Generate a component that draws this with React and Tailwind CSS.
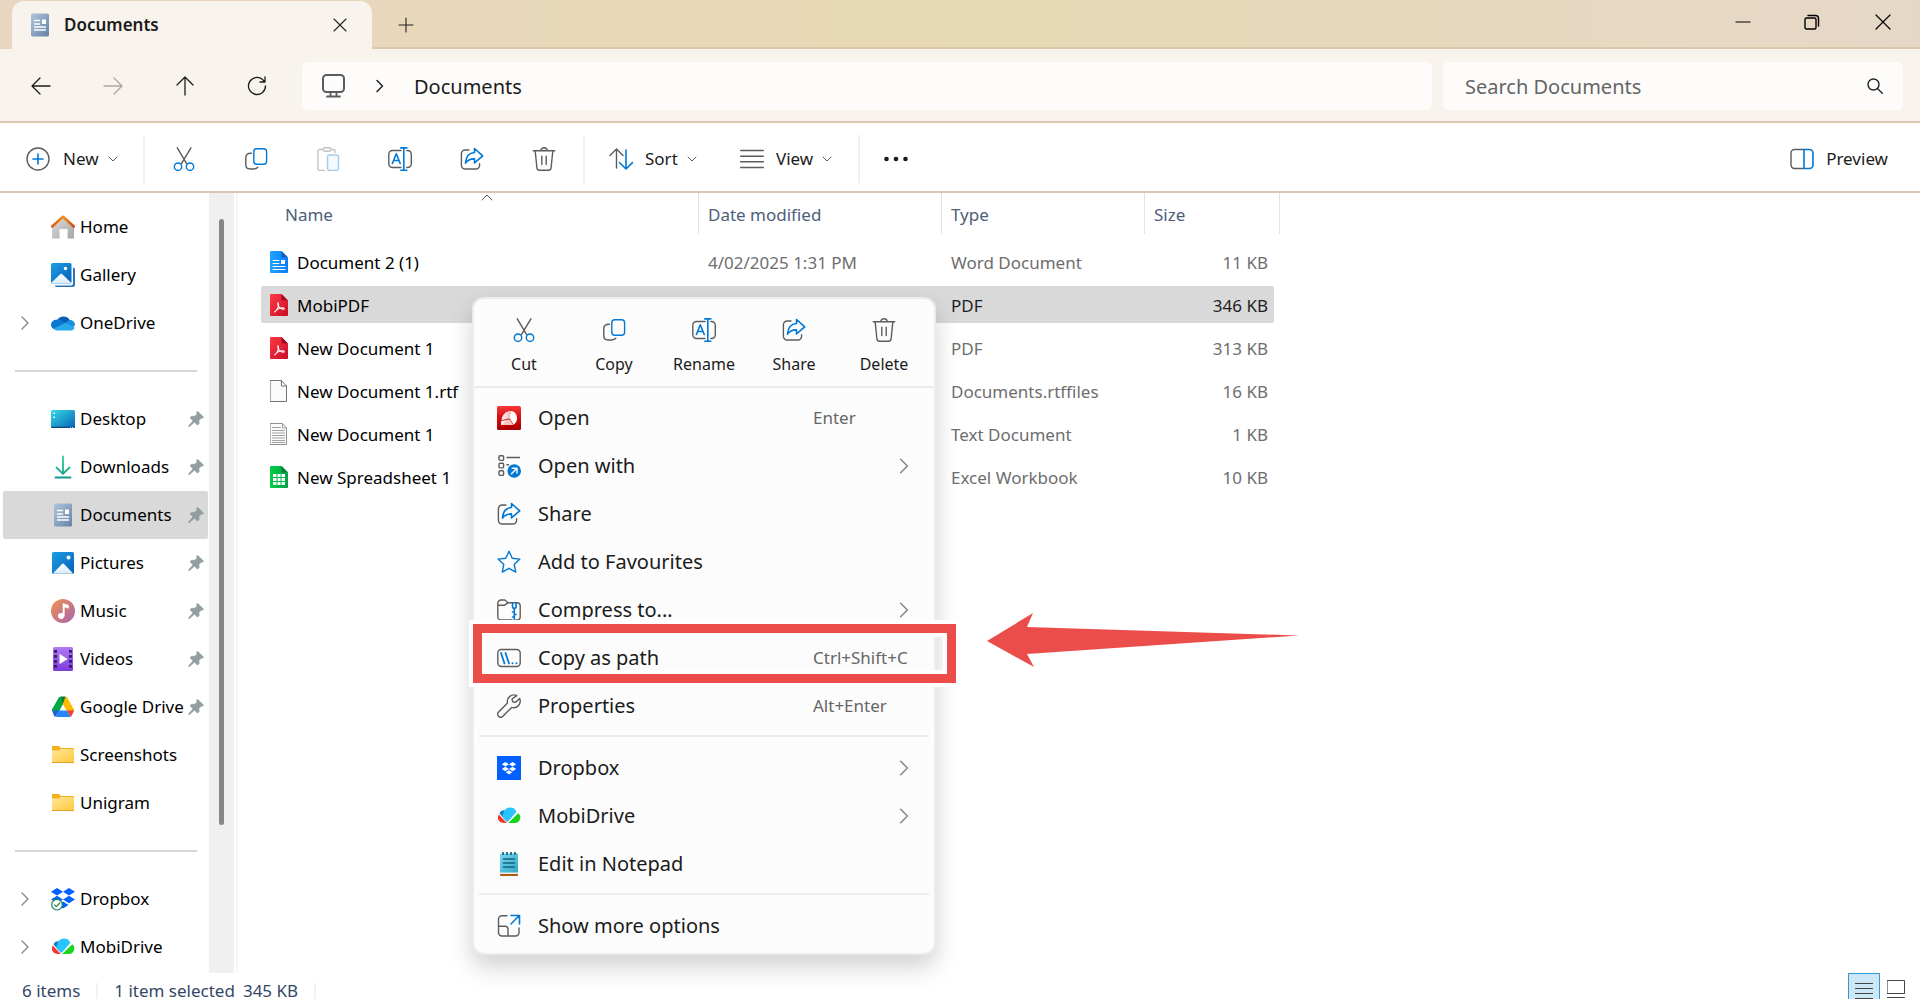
const Icon = ({ children, className = 'w-6 h-6', box = '0 0 24 24' }) => (
    <svg viewBox={box} className={`${className} shrink-0`} fill="none" stroke="#5c5c5c" strokeWidth="1.4" strokeLinecap="round" strokeLinejoin="round" aria-hidden="true">
        {children}
    </svg>
);

const BLUE = '#0078d4';

/* Command icons */
const CutIcon = () => (
    <Icon>
        <path d="M5.3.8l9.2 15.6M18.9.8L9.6 16.4" />
        <g stroke={BLUE}><circle cx="6" cy="19.7" r="3.7" /><circle cx="18" cy="19.7" r="3.7" /></g>
    </Icon>
);
const CopyIcon = () => (
    <Icon>
        <path d="M7.4 6.2C3.5 6 1.8 7.600 1.800 10.500v7.300c0 2.600 1.600 4.200 4.200 4.200h3.500c2 0 3.600-.6 4.300-1.800" />
        <rect x="9.8" y="1.700" width="12.800" height="15.600" rx="3" stroke={BLUE} />
    </Icon>
);
const PasteIcon = () => (
    <Icon>
        <g stroke="#c4c4c4">
            <path d="M7 2.500H3.500a1.500 1.500 0 0 0-1.500 1.500v18a1.500 1.500 0 0 0 1.500 1.500h5M15 2.500h2.500a1.500 1.500 0 0 1 1.500 1.500v1.500" />
            <rect x="7" y=".8" width="8" height="3.500" rx="1.700" />
        </g>
        <rect x="11.500" y="8" width="11" height="15.500" rx="2" stroke="#a3cdec" fill="#f3f9fd" />
    </Icon>
);
const RenameIcon = () => (
    <Icon>
        <path d="M13 3.500H4.500a3.700 3.700 0 0 0-3.700 3.700v9.600a3.700 3.700 0 0 0 3.700 3.700H13M18.800 3.500h.8a3.700 3.700 0 0 1 3.700 3.700v9.600a3.700 3.700 0 0 1-3.700 3.700h-.8" />
        <path d="M12.800.9h6M12.800 23.200h6M15.800.9v22.300M4.400 16.500L8.300 6.800l3.900 9.700M5.700 13.500h5.200" stroke={BLUE} strokeWidth="1.600" />
    </Icon>
);
const ShareIcon = () => (
    <Icon>
        <path d="M9 3H5.200A3.800 3.800 0 0 0 1.400 6.800v11.400A3.800 3.800 0 0 0 5.200 22h10.600a3.800 3.800 0 0 0 3.800-3.800v-1.400" />
        <path d="M14.500 1.500l8.200 7.400-8.200 7v-4c-4.200-.1-7 1-9 4.300.3-6 3.200-10.200 9-10.700z" stroke={BLUE} strokeWidth="1.600" />
    </Icon>
);
const DeleteIcon = () => (
    <Icon>
        <path d="M1.300 3.700h21.400M8.800 3.500a3.200 2.800 0 0 1 6.400 0M3.200 4l1.700 16.800a2.500 2.500 0 0 0 2.500 2.400h9.200a2.500 2.500 0 0 0 2.500-2.400L20.800 4M9.800 9.200v8.300M14.200 9.200v8.300" />
    </Icon>
);

const ChevronDown = () => <Icon className="w-2.5 h-2.5" box="0 0 10 10"><path d="M1 3l4 4 4-4" strokeWidth="1" /></Icon>;
const ChevronRight = ({ className = 'w-4 h-4' }) => <Icon className={className} box="0 0 16 16"><path d="M5 2l6 6-6 6" stroke="#858585" strokeWidth="1.300" /></Icon>;

/* Colour icons */
const DocumentsIcon = () => (
    <Icon>
        <defs><linearGradient id="docs" x1="0" y1="0" x2="1" y2="1"><stop stopColor="#b0c5dc" /><stop offset="1" stopColor="#6482a6" /></linearGradient></defs>
        <rect x="3" y=".5" width="18" height="23" rx="1.500" fill="url(#docs)" stroke="none" />
        <path d="M6.500 7.500h5M6.500 11h5M6.500 14h11M6.500 17h11" stroke="#fff" />
        <rect x="14" y="6.500" width="4" height="4.500" fill="#fff" stroke="none" />
    </Icon>
);
const HomeIcon = () => (
    <Icon>
        <defs>
            <linearGradient id="wall" x1="0" y1="0" x2="1" y2="1"><stop stopColor="#dedede" /><stop offset="1" stopColor="#a5a5a5" /></linearGradient>
            <linearGradient id="roof" x1="0" x2="1"><stop stopColor="#dd5c14" /><stop offset=".5" stopColor="#f09020" /><stop offset="1" stopColor="#d04a0c" /></linearGradient>
        </defs>
        <path d="M1 11L12 2l11 9v11.500a1 1 0 0 1-1 1h-5.500V14h-8v9.500H2a1 1 0 0 1-1-1z" fill="url(#wall)" stroke="none" />
        <path d="M1.200 11.500L12 1.800l10.800 9.700" stroke="url(#roof)" strokeWidth="2.600" />
    </Icon>
);
const PhotoDefs = () => (
    <defs>
        <linearGradient id="photo" x1="0" y1="0" x2="1" y2="1"><stop stopColor="#1ba0e8" /><stop offset="1" stopColor="#0a5db5" /></linearGradient>
        <linearGradient id="hill" x1="0" y1="0" x2="0" y2="1"><stop stopColor="#fff" /><stop offset="1" stopColor="#d8ebfa" /></linearGradient>
    </defs>
);
const GalleryIcon = () => (
    <Icon>
        <PhotoDefs />
        <path d="M22 4.500a2 2 0 0 1 2 1.500v15.500a2.500 2.500 0 0 1-2.500 2.500H5.500a2.500 2.500 0 0 1-2-1.500H20a2 2 0 0 0 2-2z" fill="#2875bd" stroke="none" />
        <rect width="20.500" height="20.500" rx="1.500" fill="url(#photo)" stroke="none" />
        <path d="M0 20l9.500-9a1.200 1.200 0 0 1 1.500 0l9.500 9-1 .5H1z" fill="url(#hill)" stroke="none" />
        <circle cx="14.500" cy="5.500" r="1.700" fill="#fff" stroke="none" />
    </Icon>
);
const PicturesIcon = () => (
    <Icon>
        <PhotoDefs />
        <rect x="1" y="1" width="22" height="22" rx="1.500" fill="url(#photo)" stroke="none" />
        <path d="M2 22.200l9.300-9.400a1 1 0 0 1 1.400 0l9.300 9.400-1 .5H3z" fill="url(#hill)" stroke="none" />
        <circle cx="17.500" cy="6.500" r="2" fill="#fff" stroke="none" />
    </Icon>
);
const OneDriveIcon = () => (
    <Icon>
        <g stroke="none">
            <path d="M6 10a7 7 0 0 1 12.500-1.300L15 15 6 12z" fill="#0a5fb4" />
            <path d="M9 8.800L15 12 4 18.500a5 5 0 0 1-4-5A5 5 0 0 1 5 8.800a7 7 0 0 1 4 0z" fill="#0b78d2" />
            <path d="M13.500 12.500l5-3.800c3.500.2 5.500 2.800 5.500 5.300l-2 2.500z" fill="#1490df" />
            <path d="M2.500 17.800L14 12l9.500 4.200a4 4 0 0 1-4 3.300H5.500a5.500 5.500 0 0 1-3-1.700z" fill="#28a8ea" />
        </g>
    </Icon>
);
const DesktopIcon = () => (
    <Icon>
        <defs><linearGradient id="desk" x1="0" y1="0" x2="1" y2="1"><stop stopColor="#35dbe4" /><stop offset="1" stopColor="#0a62b8" /></linearGradient></defs>
        <rect y="3" width="24" height="18" rx="1.500" fill="url(#desk)" stroke="none" />
        <path d="M0 19.800h24a1.300 1.300 0 0 1-1.300 1.200H1.300A1.300 1.300 0 0 1 0 19.800z" fill="#094a7c" stroke="none" />
        <path d="M2.500 5.500h1.500v1.500H2.500zM2.500 9.500h1.500V11H2.500zM19 19.900h1v.8h-1zM21 19.900h1v.8h-1z" fill="#fff" stroke="none" />
    </Icon>
);
const DownloadsIcon = () => (
    <Icon>
        <defs><linearGradient id="down" gradientUnits="userSpaceOnUse" x1="0" y1="0" x2="0" y2="24"><stop stopColor="#35d488" /><stop offset="1" stopColor="#10958f" /></linearGradient></defs>
        <path d="M12 1.500v17M5.500 12.500l6.500 6.300 6.500-6.300M4.500 22.500h15" stroke="url(#down)" strokeWidth="1.800" />
    </Icon>
);
const MusicIcon = () => (
    <Icon>
        <defs><linearGradient id="music" x1="0" y1="0" x2="1" y2="1"><stop stopColor="#f2924e" /><stop offset="1" stopColor="#a765b0" /></linearGradient></defs>
        <circle cx="12" cy="12" r="12" fill="url(#music)" stroke="none" />
        <circle cx="10" cy="17" r="3" fill="#fff" stroke="none" />
        <path d="M12 17V4.500l5.500 1.800v3L13.300 8v9z" fill="#fff" stroke="#fff" strokeWidth=".6" />
    </Icon>
);
const VideosIcon = () => (
    <Icon>
        <defs><linearGradient id="video" x1="0" y1="0" x2="0" y2="1"><stop stopColor="#b07af2" /><stop offset="1" stopColor="#7e3bdc" /></linearGradient></defs>
        <rect x="2" width="20" height="24" rx="1.500" fill="url(#video)" stroke="none" />
        <path d="M4.500 3v19M19.500 3v19" stroke="#3c1a6e" strokeWidth="3" strokeDasharray="2.800 2.200" strokeLinecap="butt" />
        <path d="M9 7.500l7.200 4.500L9 16.500z" fill="#fff" stroke="#fff" strokeWidth=".6" />
    </Icon>
);
const GoogleDriveIcon = () => (
    <Icon>
        <g stroke="none">
            <path d="M8 2.200L1.200 14a2.500 2.500 0 0 0 0 2h7L13 7.300 9.500 1.700z" fill="#00a743" />
            <path d="M9.500 1.700C10 1.500 14 1.500 14.500 1.700L16 2.500 12 9z" fill="#0a7d3a" />
            <path d="M14.500 1.700c.8.100 1.300.4 1.700 1L23 14.500a2.500 2.500 0 0 1 0 1.500h-7.200L11.800 9z" fill="#ffba00" />
            <path d="M1 15.500h7.500l-4 6.300c-.7-.2-1-.5-1.400-1.100z" fill="#1a62d6" />
            <path d="M8.200 15.500h7.600l4 6.300c-.5.300-14.500.3-15.300 0z" fill="#2684fc" />
            <path d="M15.800 15.500H23c0 1-2 4.500-2.300 5.200-.3.600-.6.900-1 1.100z" fill="#ea4335" />
        </g>
    </Icon>
);
const FolderIcon = () => (
    <Icon>
        <defs><linearGradient id="folder" x1="0" y1="0" x2="1" y2="1"><stop stopColor="#ffe79a" /><stop offset="1" stopColor="#ffc83c" /></linearGradient></defs>
        <path d="M1 4a1 1 0 0 1 1-1h6l2 2h12a1 1 0 0 1 1 1v5H1z" fill="#f2b01e" stroke="none" />
        <path d="M1 7.500h7l1.500-1.500H23v13a1 1 0 0 1-1 1H2a1 1 0 0 1-1-1z" fill="url(#folder)" stroke="none" />
        <path d="M1.500 19.500h21" stroke="#e3a11c" strokeWidth="1" />
    </Icon>
);
const dropboxPath = 'M6 1l6 3.700-6 3.700-6-3.700zM18 1l6 3.700-6 3.700-6-3.700zM6 8.800l6 3.700-6 3.700-6-3.700zM18 8.800l6 3.700-6 3.700-6-3.700zM12 14.600l5.500 3.500L12 21.600l-5.500-3.500z';
const DropboxIcon = () => (
    <Icon>
        <path d={dropboxPath} fill="#0061fe" stroke="none" />
        <circle cx="6" cy="17.700" r="5.300" fill="#fff" stroke="#1d8757" strokeWidth="1.200" />
        <path d="M3.500 17.800l1.800 1.800 3.400-3.600" stroke="#1d8757" strokeWidth="1.200" />
    </Icon>
);
const DropboxTile = () => (
    <Icon>
        <path d="M0 0h24v24H0z" fill="#0061fe" stroke="none" />
        <path d={dropboxPath} fill="#fff" stroke="none" transform="translate(4.800 5.500) scale(.6)" />
    </Icon>
);
const MobiDriveIcon = () => (
    <Icon>
        <g stroke="none">
            <path d="M2.500 9.500a5 5 0 0 1 5-3.300l2 11z" fill="#1681c4" />
            <path d="M1.800 10.500l8 8.500H6.500a5.500 5.500 0 0 1-4.700-8.500z" fill="#f6352b" />
            <path d="M6.800 8.500a6.500 6.500 0 0 1 12.500-.5l-9 10.200L5 12.500z" fill="#29c3ff" />
            <path d="M21.300 9.300A5.500 5.500 0 0 1 18 19h-7z" fill="#17d41d" />
            <path d="M20.800 8L10.500 19" stroke="#fff" strokeWidth="1" />
        </g>
    </Icon>
);
const PinIcon = () => (
    <Icon className="w-4 h-4" box="0 0 16 16">
        <path d="M9.800.5l5.700 5.700-1.200 1-1-.2-2.400 2.600.1 3-1.500 1.500-3-3L1.500 15.500.7 15.600l.1-.8 4.300-5-3-3L3.600 5.300l3 .1L9.200 3 8.800 1.500z" fill="#919ca3" stroke="#919ca3" strokeWidth=".8" />
    </Icon>
);

/* File type icons, 18 wide by 22 high */
const Sheet = ({ children }) => <Icon className="w-[18px] h-[22px]" box="0 0 18 22">{children}</Icon>;
const WordFile = () => (
    <Sheet>
        <defs><linearGradient id="word" x1="0" x2="1"><stop stopColor="#22a4ff" /><stop offset="1" stopColor="#0a7cf5" /></linearGradient></defs>
        <path d="M1 0h10.500L18 6.500V21a1 1 0 0 1-1 1H1a1 1 0 0 1-1-1V1a1 1 0 0 1 1-1z" fill="url(#word)" stroke="none" />
        <path d="M11.500 0L18 6.500h-6.500z" fill="#0b62c4" stroke="none" />
        <path d="M3 9.500h6M3 12.500h6M3 15.500h12M3 18.500h12" stroke="#fff" strokeWidth="1" />
        <rect x="11" y="9" width="4" height="4" fill="#fff" stroke="none" />
    </Sheet>
);
const PdfFile = () => (
    <Sheet>
        <defs><linearGradient id="pdf" x1="0" y1="0" x2="1" y2="1"><stop stopColor="#ff3a44" /><stop offset="1" stopColor="#c90d28" /></linearGradient></defs>
        <path d="M1 0h10.500L18 6.500V21a1 1 0 0 1-1 1H1a1 1 0 0 1-1-1V1a1 1 0 0 1 1-1z" fill="url(#pdf)" stroke="none" />
        <path d="M11.500 0L18 6.500h-6.500z" fill="#a60a20" stroke="none" />
        <path d="M8 8.500c-1 2.500 2 6.500 5 6.800 1.800 0 1.500-1.600-.5-1.500-3 .1-5.500 1.300-7.800 4M8 8.500c1.600 2.800-.5 7-3.300 9.300" stroke="#fff" strokeWidth="1.100" />
    </Sheet>
);
const BlankFile = () => (
    <Sheet>
        <path d="M.5.5h11l5 5.500v15.500H.5z" fill="#fafafa" stroke="#757575" strokeWidth="1" />
        <path d="M11.500.5V6h5" stroke="#757575" strokeWidth="1" />
    </Sheet>
);
const TextFile = () => (
    <Sheet>
        <path d="M.5.5h12l4 4.500v16.500H.5z" fill="#fafafa" stroke="#8f8f8f" strokeWidth="1" />
        <path d="M12.500.5V5h4M2.500 4.500h8M2.500 7.500h12M2.500 10h12M2.500 12.500h12M2.500 15h12M2.500 17.500h12M2.500 19.500h12" stroke="#a0a0a0" strokeWidth="1" />
    </Sheet>
);
const ExcelFile = () => (
    <Sheet>
        <defs><linearGradient id="xls" x1="0" x2="1"><stop stopColor="#00cf45" /><stop offset="1" stopColor="#00a04a" /></linearGradient></defs>
        <path d="M1 0h10.500L18 6.500V21a1 1 0 0 1-1 1H1a1 1 0 0 1-1-1V1a1 1 0 0 1 1-1z" fill="url(#xls)" stroke="none" />
        <path d="M11.500 0L18 6.500h-6.500z" fill="#078038" stroke="none" />
        <path d="M3 8h12v11H3z" fill="#fff" stroke="none" />
        <path d="M7 8v11M11 8v11M3 11.500h12M3 15.500h12" stroke="#00b648" strokeWidth="1" />
    </Sheet>
);

/* Context menu icons */
const MobiPdfApp = () => (
    <Icon>
        <defs>
            <linearGradient id="app" x1="0" y1="0" x2="0" y2="1"><stop stopColor="#fa3a3a" /><stop offset=".5" stopColor="#d40a0e" /><stop offset="1" stopColor="#a80000" /></linearGradient>
            <linearGradient id="fan" x1="0" x2="1"><stop stopColor="#fff" /><stop offset="1" stopColor="#f7b4b0" /></linearGradient>
        </defs>
        <rect width="24" height="24" rx="1.500" fill="url(#app)" stroke="none" />
        <path d="M4 19c0-8 3-14 10-14l-2 8-2 6z" fill="url(#fan)" stroke="none" />
        <path d="M14 5c4 .5 6 3.500 6 7.500 0 3-1.500 5-4 6.500L12 13z" fill="#fff" stroke="none" />
        <path d="M12.500 13L4.500 14.500M12.500 13L16 18.500" stroke="#d40a0e" strokeWidth=".9" />
        <path d="M4 19l8.500-5.500 3.500 5.500z" fill="#f9c5c2" stroke="none" />
    </Icon>
);
const OpenWithIcon = () => (
    <Icon>
        <rect x="2" y="1.800" width="4.600" height="4.600" rx="1" /><rect x="2" y="9.300" width="4.600" height="4.600" rx="1" /><rect x="2" y="16.800" width="4.600" height="4.600" rx="1" />
        <path d="M10 3.500h12.500M10 10.800h1.500" />
        <circle cx="17.200" cy="17" r="6.800" fill={BLUE} stroke="none" />
        <path d="M14.500 19.700l5.200-5.200M15.200 14.200h4.800v4.800" stroke="#fff" />
    </Icon>
);
const StarIcon = () => <Icon><path d="M12 1.200l3.200 7 7.700.9-5.700 5.300 1.500 7.700L12 18.300l-6.700 3.800 1.500-7.700L1.100 9.100l7.700-.9z" stroke={BLUE} /></Icon>;
const CompressIcon = () => (
    <Icon>
        <path d="M15 22H4a3.200 3.200 0 0 1-3.200-3.200V5.200A3.200 3.200 0 0 1 4 2h3.800l3.200 2.800h9a3.200 3.200 0 0 1 3.200 3.200v10.800A3.200 3.200 0 0 1 20 22h-1M.8 7.200h6.700L11 4.800" />
        <path d="M15.500 5v3.500a1.800 1.800 0 0 0 3.600 0V5M17.300 10.500v12M15.500 14h1.800M17.300 16.500h1.800M15.500 19h1.800" stroke={BLUE} strokeWidth="1.600" />
    </Icon>
);
const PathIcon = () => (
    <Icon>
        <rect x=".8" y="3.500" width="22.400" height="17" rx="3.500" />
        <path d="M4 7l3.500 10.500M8.500 7L12 17.500" stroke={BLUE} strokeWidth="1.800" />
        <path d="M15.500 17.300v.01M19.500 17.300v.01" stroke={BLUE} strokeWidth="2" />
    </Icon>
);
const WrenchIcon = () => (
    <Icon><path d="M19.800 1.600a6.600 6.600 0 0 0-9.300 7.500L1.600 18a3 3 0 0 0 4.300 4.300l8.800-8.900a6.600 6.600 0 0 0 7.900-9l-4 3.900-3-.6-.6-2.700z" /></Icon>
);
const NotepadIcon = () => (
    <Icon>
        <defs><linearGradient id="pad" x1="0" y1="0" x2="1" y2="1"><stop stopColor="#75d6f0" /><stop offset="1" stopColor="#36a9c8" /></linearGradient></defs>
        <path d="M3 19h18v4a1 1 0 0 1-1 1H4a1 1 0 0 1-1-1z" fill="#ad5a10" stroke="none" />
        <path d="M3 19h18v3H3z" fill="#ececec" stroke="none" />
        <path d="M4 1.500h16a1 1 0 0 1 1 1V20.500H3v-18a1 1 0 0 1 1-1z" fill="url(#pad)" stroke="none" />
        <path d="M6 0v3M10 0v3M14 0v3M18 0v3" stroke="#11586f" strokeWidth="1.600" strokeLinecap="butt" />
        <path d="M6.500 7h11M6.500 11h11M6.500 15h11" stroke="#126379" strokeWidth="1.600" />
    </Icon>
);
const MoreOptionsIcon = () => (
    <Icon>
        <path d="M10 1.800H5a3.500 3.500 0 0 0-3.500 3.500v13.200A3.500 3.500 0 0 0 5 22h13.500a3.500 3.500 0 0 0 3.500-3.500V14M1.800 12.300H8a3 3 0 0 1 3 3V22" />
        <path d="M14 10l8-8.200M14 1.500h8.500V10" stroke={BLUE} strokeWidth="1.600" />
    </Icon>
);

const sidebarItems = [
    { label: 'Home', icon: HomeIcon },
    { label: 'Gallery', icon: GalleryIcon },
    { label: 'OneDrive', icon: OneDriveIcon, expandable: true },
    { divider: true },
    { label: 'Desktop', icon: DesktopIcon, pinned: true },
    { label: 'Downloads', icon: DownloadsIcon, pinned: true },
    { label: 'Documents', icon: DocumentsIcon, pinned: true, active: true },
    { label: 'Pictures', icon: PicturesIcon, pinned: true },
    { label: 'Music', icon: MusicIcon, pinned: true },
    { label: 'Videos', icon: VideosIcon, pinned: true },
    { label: 'Google Drive', icon: GoogleDriveIcon, pinned: true },
    { label: 'Screenshots', icon: FolderIcon },
    { label: 'Unigram', icon: FolderIcon },
    { divider: true },
    { label: 'Dropbox', icon: DropboxIcon, expandable: true },
    { label: 'MobiDrive', icon: MobiDriveIcon, expandable: true },
];

const files = [
    { name: 'Document 2 (1)', icon: WordFile, date: '4/02/2025 1:31 PM', type: 'Word Document', size: '11 KB' },
    { name: 'MobiPDF', icon: PdfFile, date: '', type: 'PDF', size: '346 KB', selected: true },
    { name: 'New Document 1', icon: PdfFile, date: '', type: 'PDF', size: '313 KB' },
    { name: 'New Document 1.rtf', icon: BlankFile, date: '', type: 'Documents.rtffiles', size: '16 KB' },
    { name: 'New Document 1', icon: TextFile, date: '', type: 'Text Document', size: '1 KB' },
    { name: 'New Spreadsheet 1', icon: ExcelFile, date: '', type: 'Excel Workbook', size: '10 KB' },
];

const quickActions = [
    { label: 'Cut', icon: CutIcon },
    { label: 'Copy', icon: CopyIcon },
    { label: 'Rename', icon: RenameIcon },
    { label: 'Share', icon: ShareIcon },
    { label: 'Delete', icon: DeleteIcon },
];

const menuGroups = [
    [
        { label: 'Open', icon: MobiPdfApp, shortcut: 'Enter' },
        { label: 'Open with', icon: OpenWithIcon, submenu: true },
        { label: 'Share', icon: ShareIcon },
        { label: 'Add to Favourites', icon: StarIcon },
        { label: 'Compress to...', icon: CompressIcon, submenu: true },
        { label: 'Copy as path', icon: PathIcon, shortcut: 'Ctrl+Shift+C' },
        { label: 'Properties', icon: WrenchIcon, shortcut: 'Alt+Enter' },
    ],
    [
        { label: 'Dropbox', icon: DropboxTile, submenu: true },
        { label: 'MobiDrive', icon: MobiDriveIcon, submenu: true },
        { label: 'Edit in Notepad', icon: NotepadIcon },
    ],
    [{ label: 'Show more options', icon: MoreOptionsIcon }],
];

const TitleBar = () => (
    <header className="flex h-[49px] shrink-0 items-end bg-linear-to-r from-[#e8d6c0] via-[#e8d9b5] to-[#e6d8c7] pl-3">
        <div className="flex h-12 w-[360px] items-center rounded-t-xl bg-[#f8f4ed] pl-4 pr-5">
            <DocumentsIcon />
            <span className="ml-3 flex-1 font-semibold">Documents</span>
            <button aria-label="Close tab" className="flex h-6 w-6 items-center justify-center">
                <Icon className="h-4 w-4" box="0 0 16 16"><path d="M2 2l12 12M14 2L2 14" stroke="#222" strokeWidth="1.100" /></Icon>
            </button>
        </div>
        <div className="flex h-full flex-1 border-b-2 border-[#dcc9ac]">
            <button aria-label="New tab" className="flex h-[49px] w-[68px] items-center justify-center">
                <Icon className="h-4 w-4" box="0 0 16 16"><path d="M8 1v14M1 8h14" stroke="#222" strokeWidth="1.100" /></Icon>
            </button>
            <div className="flex-1" />
            <button aria-label="Minimise" className="flex h-[43px] w-[69px] items-center justify-center">
                <Icon className="h-4 w-4" box="0 0 16 16"><path d="M1 8h14" stroke="#000" strokeWidth="1.200" /></Icon>
            </button>
            <button aria-label="Restore" className="flex h-[43px] w-[69px] items-center justify-center">
                <Icon className="h-4 w-4" box="0 0 16 16">
                    <rect x="1" y="4" width="11" height="11" rx="1.500" stroke="#000" />
                    <path d="M4 1.500h7.500a3 3 0 0 1 3 3V12" stroke="#000" />
                </Icon>
            </button>
            <button aria-label="Close" className="flex h-[43px] w-[74px] items-center justify-center">
                <Icon className="h-4 w-4" box="0 0 16 16"><path d="M1 1l14 14M15 1L1 15" stroke="#000" strokeWidth="1.200" /></Icon>
            </button>
        </div>
    </header>
);

const NavButton = ({ label, path, faded }) => (
    <button aria-label={label} className="flex h-12 w-[72px] items-center justify-center">
        <Icon className="h-5 w-5" box="0 0 20 20"><path d={path} stroke={faded ? '#aaa5a0' : '#1c1c1c'} strokeWidth="1.300" /></Icon>
    </button>
);

const AddressBar = () => (
    <div className="flex h-[74px] shrink-0 items-center border-b-2 border-[#d8c8ae] bg-[#f8f4ed] pl-[5px] pr-[17px] pt-0.5">
        <nav className="flex w-[297px]">
            <NavButton label="Back" path="M19 10H1M9 2l-8 8 8 8" />
            <NavButton label="Forward" path="M1 10h18M11 2l8 8-8 8" faded />
            <NavButton label="Up" path="M10 19V1M2 9l8-8 8 8" />
            <NavButton label="Refresh" path="M18.500 10a8.500 8.500 0 1 1-3-6.500L18 6M18 1v5h-5" />
        </nav>
        <div className="flex h-12 flex-1 items-center rounded-md bg-[#fdfcfa] pl-5">
            <Icon>
                <rect x="1" y="1" width="21" height="17" rx="3.500" strokeWidth="2" />
                <path d="M8.500 18.500v3M14.500 18.500v3M5 22.500h13" strokeWidth="1.800" />
            </Icon>
            <Icon className="ml-6.5 h-4 w-4" box="0 0 16 16"><path d="M5 2.500L10.500 8 5 13.500" stroke="#222" strokeWidth="1.500" /></Icon>
            <a href="#documents" className="ml-6.5 pt-0.5 text-xl leading-7">Documents</a>
        </div>
        <div className="ml-[11px] flex h-12 w-[460px] items-center rounded-md bg-[#fdfcfa] pl-[22px] pr-5">
            <input aria-label="Search Documents" placeholder="Search Documents" className="flex-1 bg-transparent pt-0.5 text-xl leading-7 outline-none placeholder:text-[#656565]" />
            <Icon className="h-4 w-4" box="0 0 16 16"><circle cx="6.500" cy="6.500" r="5.500" stroke="#222" /><path d="M10.500 10.500l5 5" stroke="#222" /></Icon>
        </div>
    </div>
);

const ToolButton = ({ label, icon: ToolIcon }) => (
    <button aria-label={label} className="flex h-12 w-[72px] items-center justify-center"><ToolIcon /></button>
);

const Toolbar = () => (
    <div className="flex h-[70px] shrink-0 items-center border-b-2 border-[#d8c8ae] pt-1">
        <button className="flex h-12 w-[145px] items-center border-r-2 border-[#efefef] pl-[26px]">
            <Icon><circle cx="12" cy="12" r="11" /><path d="M12 7v10M7 12h10" stroke={BLUE} strokeWidth="1.600" /></Icon>
            <span className="ml-[13px] mr-[9px]">New</span>
            <ChevronDown />
        </button>
        <div className="flex w-[440px] border-r-2 border-[#efefef] pl-[3px]">
            <ToolButton label="Cut" icon={CutIcon} />
            <ToolButton label="Copy" icon={CopyIcon} />
            <ToolButton label="Paste" icon={PasteIcon} />
            <ToolButton label="Rename" icon={RenameIcon} />
            <ToolButton label="Share" icon={ShareIcon} />
            <ToolButton label="Delete" icon={DeleteIcon} />
        </div>
        <button className="flex h-12 w-[155px] items-center pl-6">
            <Icon><path d="M7.500 21V2M1 8.500L7.500 2 14 8.500" /><path d="M17 3v19M10.500 15.500L17 22l6.500-6.500" stroke={BLUE} strokeWidth="1.600" /></Icon>
            <span className="ml-3 mr-[9px]">Sort</span>
            <ChevronDown />
        </button>
        <button className="flex h-12 w-[120px] items-center border-r-2 border-[#efefef]">
            <Icon><path d="M.7 3.500h22.600M.7 9.200h22.600M.7 14.800h22.600M.7 20.500h22.600" /></Icon>
            <span className="ml-3 mr-[9px]">View</span>
            <ChevronDown />
        </button>
        <button aria-label="See more" className="flex h-12 w-[72px] items-center justify-center">
            <Icon><g fill="#1a1a1a" stroke="none"><circle cx="2.500" cy="12" r="2.300" /><circle cx="12" cy="12" r="2.300" /><circle cx="21.500" cy="12" r="2.300" /></g></Icon>
        </button>
        <button className="ml-auto mr-8 flex h-12 items-center gap-3">
            <Icon>
                <path d="M14 2.500H4.500A3.500 3.500 0 0 0 1 6v12a3.500 3.500 0 0 0 3.500 3.500H14" />
                <path d="M14 2.500h5.500A3.500 3.500 0 0 1 23 6v12a3.500 3.500 0 0 1-3.500 3.500H14z" stroke={BLUE} strokeWidth="1.600" />
            </Icon>
            Preview
        </button>
    </div>
);

const Sidebar = () => (
    <aside className="flex w-[238px] shrink-0 border-r-2 border-[#f7f7f7] pr-0.5">
        <ul className="w-[209px] pl-[3px] pr-px pt-[10px]">
            {sidebarItems.map(({ label, icon: ItemIcon, divider, expandable, pinned, active }, i) =>
                divider ? (
                    <li key={i} className="flex h-12 items-center pl-3 pr-[11px]"><hr className="w-full border-t-2 border-[#d6d6d6]" /></li>
                ) : (
                    <li key={i}>
                        <a href={`#${label}`} className={`flex h-12 items-center rounded-xs pr-1 ${active ? 'bg-[#d9d9d9]' : ''}`}>
                            <span className="flex w-12 shrink-0 pl-[14px]">{expandable && <ChevronRight />}</span>
                            <ItemIcon />
                            <span className="ml-[5px] flex-1 whitespace-nowrap text-black">{label}</span>
                            {pinned && <PinIcon />}
                        </a>
                    </li>
                )
            )}
        </ul>
        <div className="flex-1 bg-[#f0f0f0] px-[10px] pt-[26px]">
            <div className="h-[606px] w-[5px] rounded-full bg-[#868686]" />
        </div>
    </aside>
);

const HeaderCell = ({ children, className }) => (
    <th scope="col" className="h-[47px] p-0 text-left align-top font-normal text-[#4c607a]">
        <div className={`flex h-[41px] items-center border-r border-[#e2e2e2] pt-0.5 ${className}`}>{children}</div>
    </th>
);

const FileTable = () => (
    <table className="ml-[23px] w-[1019px] table-fixed border-collapse self-start">
        <colgroup>
            <col className="w-[438px]" />
            <col className="w-[243px]" />
            <col className="w-[203px]" />
            <col className="w-[135px]" />
        </colgroup>
        <thead>
            <tr>
                <HeaderCell className="relative pl-6">
                    Name
                    <span className="absolute left-[220px] top-0"><Icon className="h-2 w-3" box="0 0 12 8"><path d="M1 7l5-5 5 5" strokeWidth="1" /></Icon></span>
                </HeaderCell>
                <HeaderCell className="pl-[9px]">Date modified</HeaderCell>
                <HeaderCell className="pl-[9px]">Type</HeaderCell>
                <HeaderCell className="pl-[9px]">Size</HeaderCell>
            </tr>
        </thead>
        <tbody>
            {files.map(({ name, icon: FileIcon, date, type, size, selected }, i) => {
                const fill = selected ? 'bg-[#d9d9d9] text-[#1f1f1f]' : 'text-[#6e6e6e]';
                return (
                    <tr key={i} className="h-[43px]">
                        <td className="p-0">
                            <div className={`flex h-[37px] items-center gap-[9px] rounded-l-xs pl-[9px] ${fill}`}>
                                <FileIcon />
                                <span className="pt-[3px] text-black">{name}</span>
                            </div>
                        </td>
                        <td className="p-0"><div className={`flex h-[37px] items-center pl-[9px] pt-[3px] ${fill}`}>{date}</div></td>
                        <td className="p-0"><div className={`flex h-[37px] items-center pl-[9px] pt-[3px] ${fill}`}>{type}</div></td>
                        <td className="p-0"><div className={`mr-[6px] flex h-[37px] items-center justify-end rounded-r-xs pr-[6px] pt-[3px] ${fill}`}>{size}</div></td>
                    </tr>
                );
            })}
        </tbody>
    </table>
);

const ContextMenu = () => (
    <div role="menu" className="absolute left-[472px] top-[297px] w-[464px] rounded-xl border-2 border-[#ececec] bg-[#fcfcfc] pb-[3px] shadow-[0_12px_24px_rgba(0,0,0,0.18)]">
        <div className="flex h-[89px] border-b-2 border-[#ebebeb] px-[5px] pt-[19px]">
            {quickActions.map(({ label, icon: ActionIcon }) => (
                <button key={label} role="menuitem" className="flex w-[90px] flex-col items-center gap-[10px] text-base leading-6">
                    <ActionIcon />
                    {label}
                </button>
            ))}
        </div>
        {menuGroups.map((group, i) => (
            <div key={i} className={i ? 'mx-[5px] mt-[5px] border-t-2 border-[#ebebeb] pt-[7px]' : 'mx-[5px] pt-[6px]'}>
                {group.map(({ label, icon: ItemIcon, shortcut, submenu }) => (
                    <button key={label} role="menuitem" className="flex h-12 w-full items-center pl-[18px] text-left">
                        <ItemIcon />
                        <span className="ml-[17px] w-[275px] text-xl leading-7">{label}</span>
                        {shortcut && <span className="text-[#666]">{shortcut}</span>}
                        {submenu && <span className="ml-[82px]"><ChevronRight className="h-[18px] w-[18px]" /></span>}
                    </button>
                ))}
            </div>
        ))}
    </div>
);

const Callout = () => (
    <>
        <div className="pointer-events-none absolute left-[473px] top-[624px] h-[59px] w-[483px] border-[9px] border-[#eb4d4b] shadow-[0_0_0_4px_#fff,inset_0_0_0_4px_#fff]" />
        <svg viewBox="0 0 312 56" className="pointer-events-none absolute left-[987px] top-[612px] h-14 w-[312px]" aria-hidden="true">
            <path d="M0 29L46 1l-6 14 272 8.500L40 42l7 13z" fill="#eb4d4b" />
        </svg>
    </>
);

const StatusBar = () => (
    <footer className="flex h-[26px] shrink-0 items-end text-[#334766]">
        <span className="border-r-2 border-[#f2f2f2] pl-[22px] pr-4 leading-4">6 items</span>
        <span className="flex gap-2 border-r-2 border-[#f2f2f2] px-4 leading-4"><span>1 item selected</span><span>345 KB</span></span>
        <div className="ml-auto flex h-full items-start pr-2">
            <button aria-label="Details view" className="flex h-8 w-8 justify-center border border-[#2e9bd6] bg-[#cce8f7] pt-2">
                <Icon className="h-[18px] w-[18px]" box="0 0 18 18"><path d="M0 1.500h18M0 6.500h18M0 11.500h18M0 16.500h18" stroke="#444" strokeWidth="1" /></Icon>
            </button>
            <button aria-label="Large icons" className="flex h-8 w-8 justify-center pt-[7px]">
                <Icon className="h-[18px] w-[18px]" box="0 0 18 18"><path d="M.5.5h17v13H.5zM.5 17.500h17" stroke="#444" strokeWidth="1" /></Icon>
            </button>
        </div>
    </footer>
);

const App = () => {
    return (
        <div className="relative flex h-screen flex-col overflow-hidden bg-white font-['Noto_Sans','Open_Sans',sans-serif] text-[17px] leading-6 text-[#1b1b1b]">
            <TitleBar />
            <AddressBar />
            <Toolbar />
            <main className="flex min-h-0 flex-1 overflow-hidden">
                <Sidebar />
                <FileTable />
            </main>
            <StatusBar />
            <ContextMenu />
            <Callout />
        </div>
    );
};
export default App;
